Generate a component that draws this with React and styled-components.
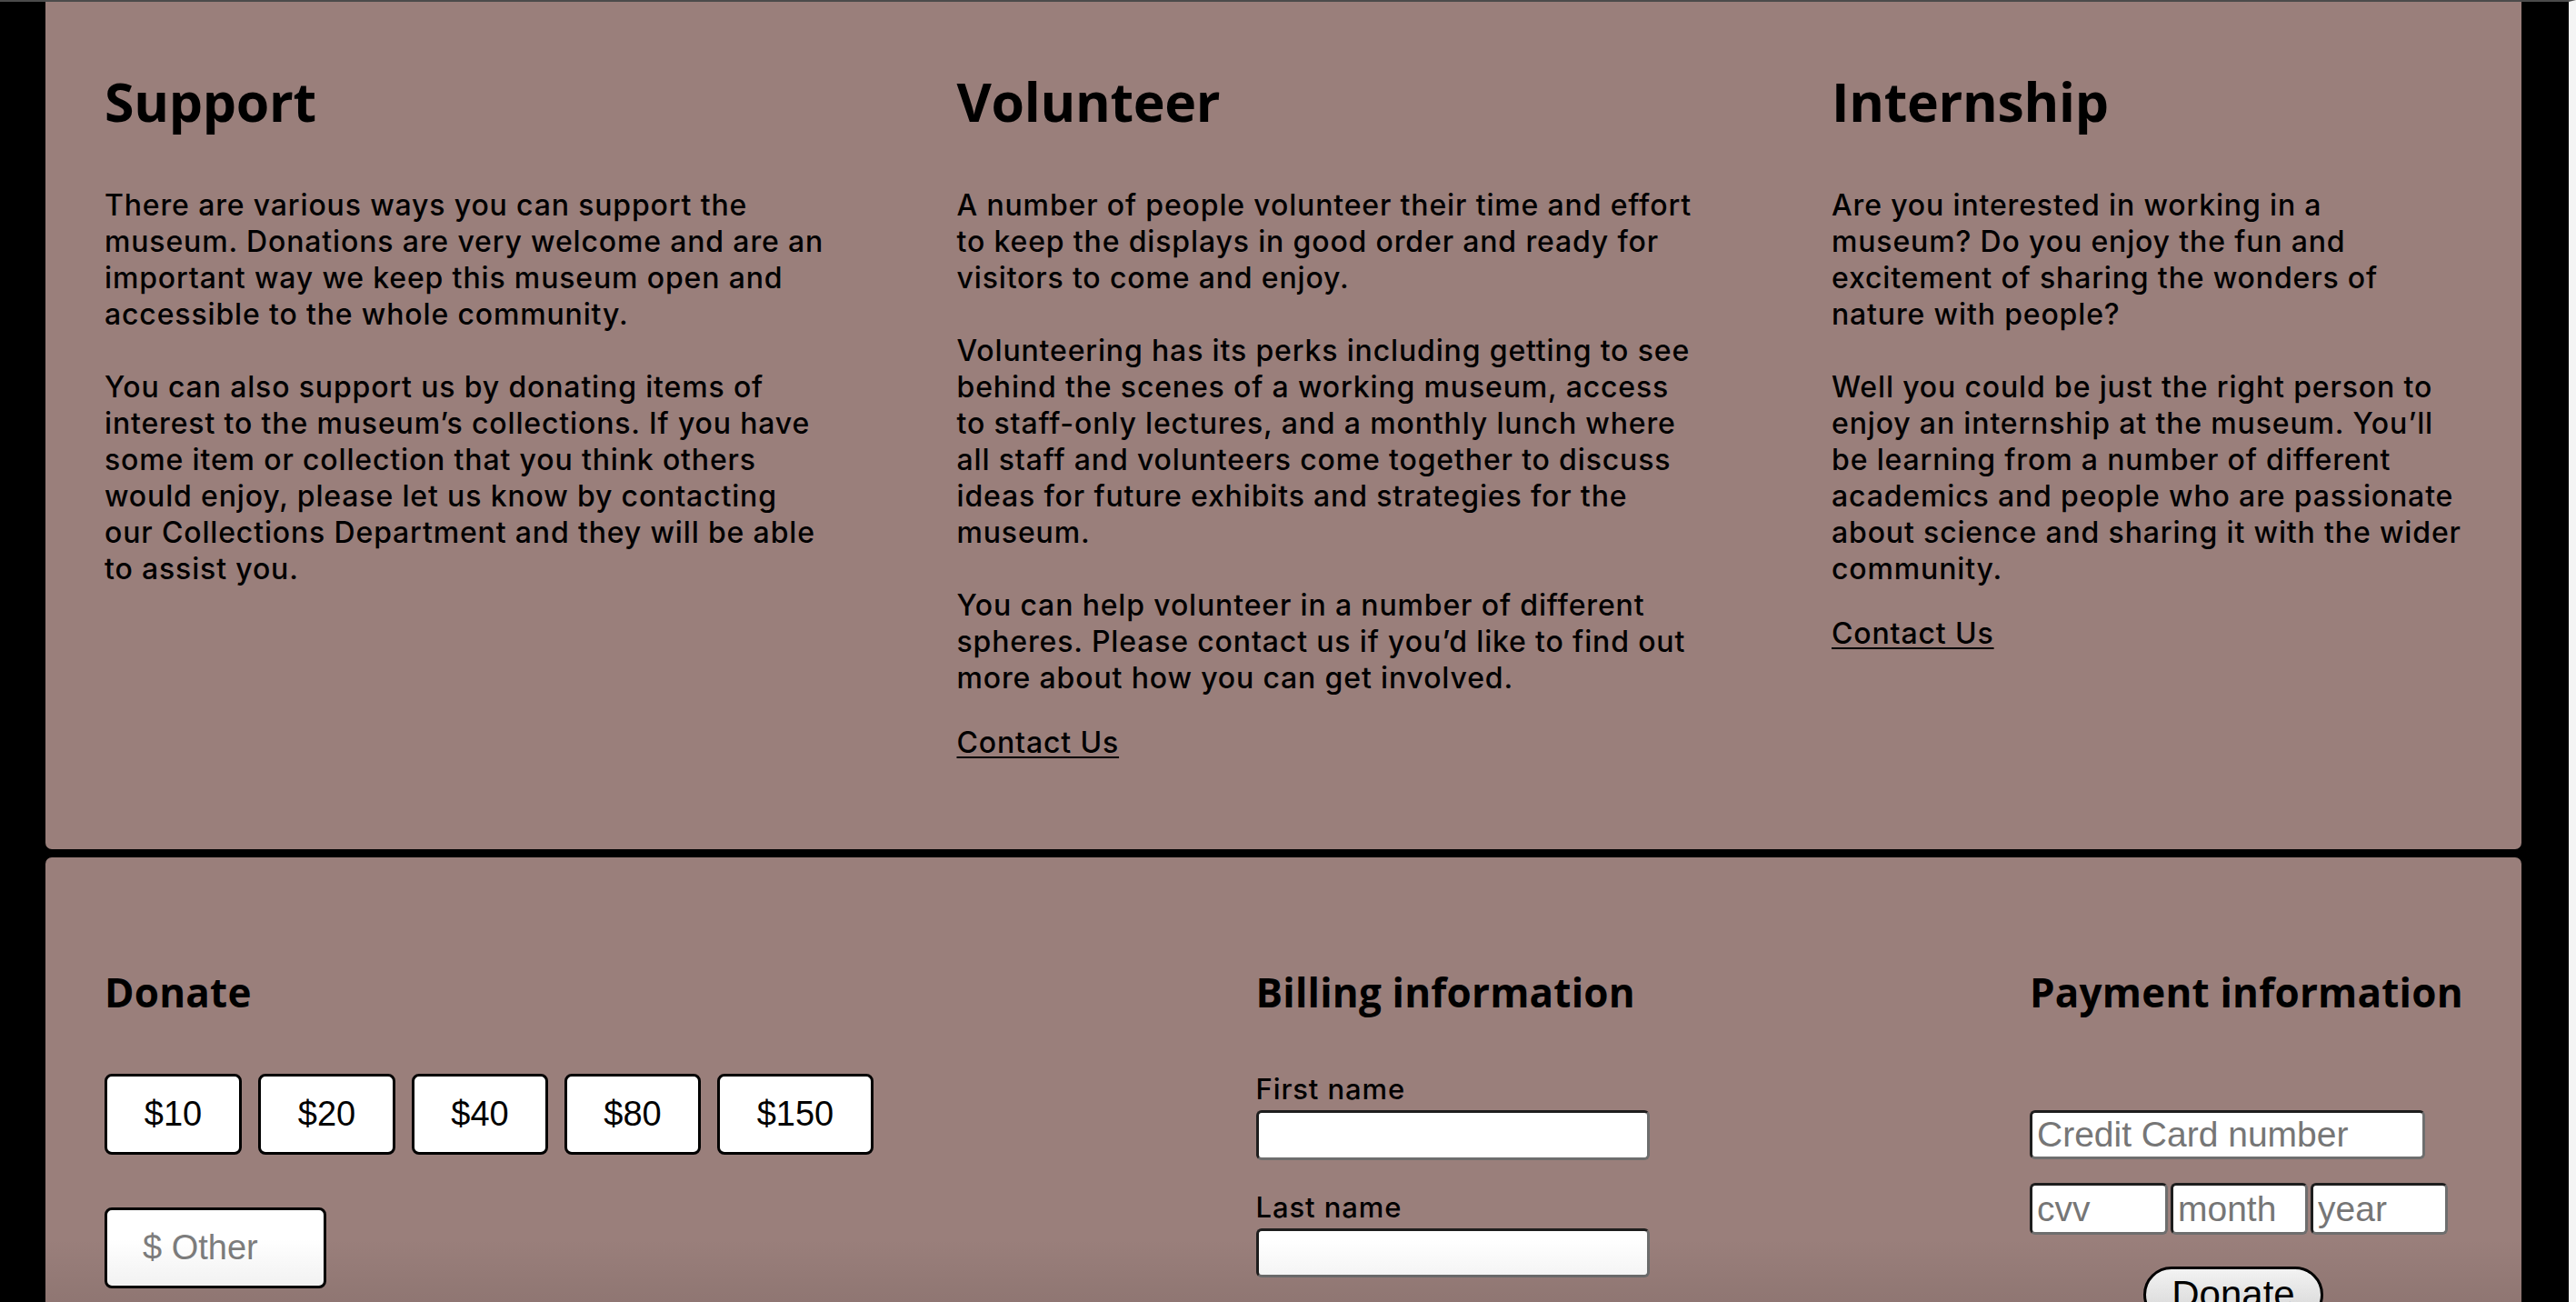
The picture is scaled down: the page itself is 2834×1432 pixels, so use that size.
import React from "react";
import styled, { createGlobalStyle } from "styled-components";

const Global = createGlobalStyle`
  html, body {
    margin: 0;
    padding: 0;
    background: #000;
    overflow: hidden;
  }
  body {
    font-family: "Inter", "Noto Sans", sans-serif;
    color: #000;
  }
  * { box-sizing: border-box; }
`;

const Page = styled.div`
  height: 100vh;
  overflow: hidden;
  position: relative;
  display: flex;
  flex-direction: column;
  gap: 9px;
  padding: 0 52px 0 50px;
  border-top: 2px solid #4b4b4b;
  border-right: 8px solid #f4f4f4;
`;

const Panel = styled.section`
  background: #9a7f7b;
  flex-shrink: 0;
`;

const InfoPanel = styled(Panel)`
  border-radius: 0 0 7px 7px;
  padding: 80px 65px 97px 65px;
  display: grid;
  grid-template-columns: 790px 815px 694px;
  justify-content: space-between;
`;

const InfoColumn = styled.article`
  display: flex;
  flex-direction: column;
`;

const SectionTitle = styled.h2`
  margin: 0 0 65px 0;
  font-family: "Open Sans", sans-serif;
  font-weight: 700;
  font-size: 59px;
  line-height: 59px;
  letter-spacing: -0.3px;
`;

const Para = styled.p`
  margin: 0;
  font-size: 32px;
  font-weight: 500;
  line-height: 40px;
  letter-spacing: 0.85px;
  white-space: nowrap;
  & + & { margin-top: 40px; }
`;

const ContactLink = styled.a`
  margin-top: 31px;
  font-size: 32px;
  font-weight: 500;
  line-height: 40px;
  letter-spacing: 0.85px;
  color: #000;
  text-decoration: underline;
  text-underline-offset: 4px;
  text-decoration-thickness: 2px;
  align-self: flex-start;
`;

const DonatePanel = styled(Panel)`
  flex: 1;
  border-radius: 7px 7px 0 0;
  padding: 126px 66px 200px 65px;
  display: flex;
  justify-content: space-between;
  align-items: flex-start;
`;

const FormColumn = styled.div`
  display: flex;
  flex-direction: column;
  align-items: flex-start;
  width: ${(p) => p.$width}px;
`;

const FormTitle = styled.h3`
  margin: 0;
  font-family: "Open Sans", sans-serif;
  font-weight: 700;
  font-size: 44px;
  line-height: 44px;
  white-space: nowrap;
  letter-spacing: 0.2px;
`;

const AmountRow = styled.div`
  display: flex;
  gap: 18px;
  margin-top: 68px;
`;

const AmountButton = styled.button`
  width: ${(p) => p.$w}px;
  height: 89px;
  border: 3px solid #000;
  border-radius: 8px;
  background: #fff;
  font-family: "Liberation Sans", Arial, sans-serif;
  font-size: 38px;
  color: #000;
  padding: 0;
`;

const OtherInput = styled.input`
  margin-top: 58px;
  width: 244px;
  height: 89px;
  border: 3px solid #000;
  border-radius: 8px;
  background: #fff;
  padding: 0 0 0 39px;
  font-family: "Liberation Sans", Arial, sans-serif;
  font-size: 38px;
  &::placeholder { color: #7d7d7d; }
`;

const FieldLabel = styled.label`
  display: block;
  font-size: 31px;
  font-weight: 500;
  line-height: 31px;
  letter-spacing: 0.9px;
  margin-top: ${(p) => p.$top}px;
`;

const TextField = styled.input`
  display: block;
  width: ${(p) => p.$w || 433}px;
  height: ${(p) => p.$h || 55}px;
  margin-top: ${(p) => p.$top || 0}px;
  border-style: solid;
  border-width: 3px;
  border-color: #1e1e1e #6e6e6e #6e6e6e #1e1e1e;
  border-radius: 6px;
  background: #fff;
  padding: 0 5px;
  font-family: "Liberation Sans", Arial, sans-serif;
  font-size: 39px;
  &::placeholder { color: #767676; }
`;

const CardRow = styled.div`
  display: flex;
  gap: 3px;
  margin-top: 26px;
`;

const SubmitButton = styled.button`
  margin-top: 35px;
  margin-left: 125px;
  width: 198px;
  height: 62px;
  border: 3px solid #000;
  border-radius: 31px;
  background: linear-gradient(#fbfbfb, #e9e9e9);
  font-family: "Liberation Sans", Arial, sans-serif;
  font-size: 42px;
  color: #000;
  padding: 0;
  line-height: 1;
`;

const BottomShade = styled.div`
  position: absolute;
  left: 0;
  right: 0;
  bottom: 0;
  height: 70px;
  pointer-events: none;
  background: linear-gradient(rgba(0, 0, 0, 0), rgba(0, 0, 0, 0.07));
`;

const amounts = [
  { v: "$10", w: 151 },
  { v: "$20", w: 151 },
  { v: "$40", w: 150 },
  { v: "$80", w: 150 },
  { v: "$150", w: 172 },
];

const columns = [
  {
    title: "Support",
    paragraphs: [
      [
        "There are various ways you can support the",
        "museum. Donations are very welcome and are an",
        "important way we keep this museum open and",
        "accessible to the whole community.",
      ],
      [
        "You can also support us by donating items of",
        "interest to the museum’s collections. If you have",
        "some item or collection that you think others",
        "would enjoy, please let us know by contacting",
        "our Collections Department and they will be able",
        "to assist you.",
      ],
    ],
    contact: false,
  },
  {
    title: "Volunteer",
    paragraphs: [
      [
        "A number of people volunteer their time and effort",
        "to keep the displays in good order and ready for",
        "visitors to come and enjoy.",
      ],
      [
        "Volunteering has its perks including getting to see",
        "behind the scenes of a working museum, access",
        "to staff-only lectures, and a monthly lunch where",
        "all staff and volunteers come together to discuss",
        "ideas for future exhibits and strategies for the",
        "museum.",
      ],
      [
        "You can help volunteer in a number of different",
        "spheres. Please contact us if you’d like to find out",
        "more about how you can get involved.",
      ],
    ],
    contact: true,
  },
  {
    title: "Internship",
    paragraphs: [
      [
        "Are you interested in working in a",
        "museum? Do you enjoy the fun and",
        "excitement of sharing the wonders of",
        "nature with people?",
      ],
      [
        "Well you could be just the right person to",
        "enjoy an internship at the museum. You’ll",
        "be learning from a number of different",
        "academics and people who are passionate",
        "about science and sharing it with the wider",
        "community.",
      ],
    ],
    contact: true,
  },
];

function Lines({ lines }) {
  return lines.map((line, i) => (
    <React.Fragment key={i}>
      {i > 0 && <br />}
      {line}
    </React.Fragment>
  ));
}

export default function App() {
  return (
    <>
      <Global />
      <Page>
        <InfoPanel>
          {columns.map((col) => (
            <InfoColumn key={col.title}>
              <SectionTitle>{col.title}</SectionTitle>
              {col.paragraphs.map((p, i) => (
                <Para key={i}>
                  <Lines lines={p} />
                </Para>
              ))}
              {col.contact && <ContactLink href="#">Contact Us</ContactLink>}
            </InfoColumn>
          ))}
        </InfoPanel>

        <DonatePanel>
          <FormColumn $width={848}>
            <FormTitle>Donate</FormTitle>
            <AmountRow>
              {amounts.map((a) => (
                <AmountButton key={a.v} $w={a.w} type="button">
                  {a.v}
                </AmountButton>
              ))}
            </AmountRow>
            <OtherInput placeholder="$ Other" />
          </FormColumn>

          <FormColumn $width={433}>
            <FormTitle>Billing information</FormTitle>
            <FieldLabel $top={69} htmlFor="first">First name</FieldLabel>
            <TextField id="first" $top={8} />
            <FieldLabel $top={36} htmlFor="last">Last name</FieldLabel>
            <TextField id="last" $top={8} $h={54} />
          </FormColumn>

          <FormColumn $width={475}>
            <FormTitle>Payment information</FormTitle>
            <TextField $top={108} $w={435} $h={54} placeholder="Credit Card number" />
            <CardRow>
              <TextField $w={152} $h={57} placeholder="cvv" />
              <TextField $w={151} $h={57} placeholder="month" />
              <TextField $w={151} $h={57} placeholder="year" />
            </CardRow>
            <SubmitButton type="button">Donate</SubmitButton>
          </FormColumn>
        </DonatePanel>
        <BottomShade />
      </Page>
    </>
  );
}
